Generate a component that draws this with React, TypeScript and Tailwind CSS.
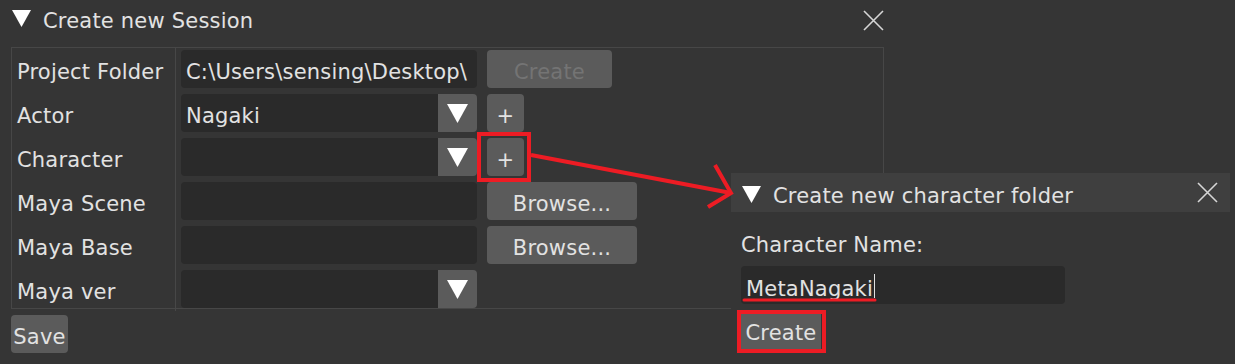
import * as React from 'react';

const font = { fontFamily: '"DejaVu Sans", "Liberation Sans", sans-serif' };

// 下向きの三角形（ツリーノード・コンボの矢印）
const DownTriangle: React.FC<{ w: number; h: number; className?: string }> = ({ w, h, className }) => (
  <svg width={w} height={h} viewBox={`0 0 ${w} ${h}`} className={className}>
    <polygon points={`0,0 ${w},0 ${w / 2},${h}`} fill="#ffffff" />
  </svg>
);

const CloseIcon: React.FC = () => (
  <svg width="21" height="21" viewBox="0 0 21 21">
    <path d="M1 1 L20 20 M20 1 L1 20" stroke="#d6d6d6" strokeWidth="1.6" fill="none" />
  </svg>
);

// ImGui のテキストは枠の中心より少し下に描かれるので pt で調整
const TextField: React.FC<{ value?: string }> = ({ value }) => (
  <div className="flex h-[38px] w-[296px] items-center overflow-hidden whitespace-nowrap rounded-[4px] bg-[#2a2a2a] pl-[5px] pt-[6px] leading-[28px]">
    {value}
  </div>
);

const Combo: React.FC<{ value?: string }> = ({ value }) => (
  <div className="flex h-[38px] w-[296px]">
    <div className="flex flex-1 items-center rounded-l-[4px] bg-[#2a2a2a] pl-[5px] pt-[6px] leading-[28px]">
      {value}
    </div>
    <div className="flex w-[39px] items-center justify-center rounded-r-[4px] bg-[#5b5b5b]">
      <DownTriangle w={21} h={19} />
    </div>
  </div>
);

const Button: React.FC<{ label: string; width: string; disabled?: boolean }> = ({ label, width, disabled }) => (
  <div
    className={`flex h-[38px] items-center justify-center rounded-[4px] bg-[#5b5b5b] pt-[6px] leading-[28px] ${width} ${
      disabled ? 'text-[#747474]' : 'text-[#e2e2e2]'
    }`}
  >
    {label}
  </div>
);

const rows: { label: string; field: React.ReactNode; action?: React.ReactNode }[] = [
  {
    label: 'Project Folder',
    field: <TextField value="C:\Users\sensing\Desktop\" />,
    action: <Button label="Create" width="w-[125px]" disabled />,
  },
  { label: 'Actor', field: <Combo value="Nagaki" />, action: <Button label="+" width="w-[37px]" /> },
  { label: 'Character', field: <Combo />, action: <Button label="+" width="w-[37px]" /> },
  { label: 'Maya Scene', field: <TextField />, action: <Button label="Browse..." width="w-[150px]" /> },
  { label: 'Maya Base', field: <TextField />, action: <Button label="Browse..." width="w-[150px]" /> },
  { label: 'Maya ver', field: <Combo /> },
];

const App: React.FC = () => {
  return (
    <div
      className="relative h-[364px] w-[1235px] overflow-hidden bg-[#353535] text-[21px] tracking-[0.2px] text-[#e2e2e2]"
      style={font}
    >
      {/* Create new Session window */}
      <div className="flex h-[41px] items-center pl-[12px] pr-[351px] leading-[28px]">
        <DownTriangle w={19} h={17} className="-translate-y-[2px]" />
        <span className="ml-[12px] pt-[1px]">Create new Session</span>
        <div className="ml-auto">
          <CloseIcon />
        </div>
      </div>

      <div className="ml-[11px] mt-[6px] w-[873px] border border-[#474747] pt-[2px]">
        <div className="flex flex-col gap-[6px]">
          {rows.map((row) => (
            <div key={row.label} className="flex h-[38px]">
              <div className="-my-[3px] flex w-[164px] items-center whitespace-nowrap border-r border-[#474747] pl-[5px] pt-[6px] leading-[28px]">
                {row.label}
              </div>
              <div className="flex items-center gap-[10px] pl-[5px]">
                {row.field}
                {row.action}
              </div>
            </div>
          ))}
        </div>
      </div>

      <div className="ml-[11px] mt-[6px]">
        <Button label="Save" width="w-[57px]" />
      </div>

      {/* Create new character folder popup */}
      <div className="absolute left-[731px] top-[173px] h-[191px] w-[499px] bg-[#353535] leading-[28px]">
        <div className="flex h-[39px] items-center bg-[#3f3f3f] pl-[11px] pr-[12px]">
          <DownTriangle w={19} h={17} className="translate-y-[2px]" />
          <span className="ml-[12px] pt-[7px]">Create new character folder</span>
          <div className="ml-auto">
            <CloseIcon />
          </div>
        </div>
        <div className="flex h-[26px] items-center px-[10px] mt-[20px]">Character Name:</div>
        <div className="ml-[10px] mt-[8px] flex h-[38px] w-[324px] items-center rounded-[4px] bg-[#2a2a2a] pl-[5px] pt-[8px]">
          MetaNagaki
          <span className="ml-[1px] h-[24px] w-px -translate-y-[3px] bg-[#e2e2e2]" />
        </div>
        <div className="ml-[10px] mt-[7px] flex h-[38px] w-[80px] items-center justify-center bg-[#5b5b5b] pt-[5px]">
          Create
        </div>
      </div>

      {/* red annotations */}
      <svg className="pointer-events-none absolute left-0 top-0" width="1235" height="364">
        <rect x="479" y="134" width="50" height="46" fill="none" stroke="#ed1c24" strokeWidth="4" />
        <line x1="531" y1="155" x2="731" y2="193" stroke="#ed1c24" strokeWidth="4" />
        <polyline points="715,165 731,193 708,207" fill="none" stroke="#ed1c24" strokeWidth="4" />
        <line x1="744" y1="300" x2="875" y2="300" stroke="#ed1c24" strokeWidth="3" strokeLinecap="round" />
        <rect x="739" y="312" width="85" height="39" fill="none" stroke="#ed1c24" strokeWidth="4" />
      </svg>
    </div>
  );
};

export default App;
